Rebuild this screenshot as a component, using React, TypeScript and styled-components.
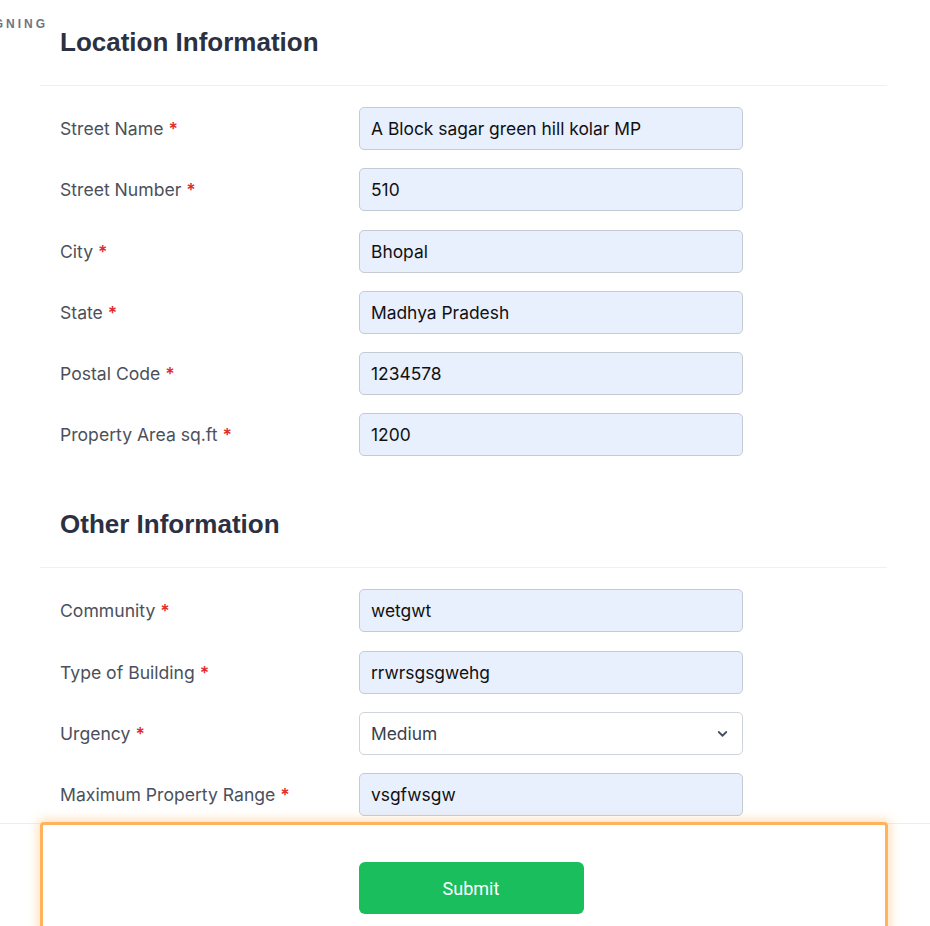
import React from "react";
import styled, { createGlobalStyle } from "styled-components";

const Global = createGlobalStyle`
  html, body { margin: 0; padding: 0; background: #fff; }
  body { font-family: Inter, "Noto Sans", sans-serif; }
  * { box-sizing: border-box; }
`;

const Page = styled.div`
  width: 930px;
  padding: 18px 0 140px 0;
`;

const Brand = styled.div`
  width: 48px;
  overflow: hidden;
  direction: rtl;
  white-space: nowrap;
  font-family: "Liberation Sans", Arial, sans-serif;
  font-size: 12px;
  font-weight: 700;
  letter-spacing: 3px;
  color: #707480;
  line-height: 12px;
  height: 12px;
`;

const Card = styled.div`
  margin: 0 43px 0 40px;
`;

const Section = styled.section`
  & + & { margin-top: 56px; }
`;

const SectionTitle = styled.h2`
  margin: -3px 0 0 0;
  padding: 0 20px 28px 20px;
  font-family: "Liberation Sans", Arial, sans-serif;
  font-size: 26px;
  line-height: 30px;
  font-weight: 700;
  color: #2b3142;
  border-bottom: 1px solid #eef0f2;
`;

const Fields = styled.div`
  display: flex;
  flex-direction: column;
  gap: 18.3px;
  padding: 21px 20px 0 20px;
`;

const Row = styled.div`
  display: grid;
  grid-template-columns: 299px 384px;
  align-items: center;
  height: 43px;
`;

const Label = styled.label`
  font-size: 17.6px;
  color: #4b505c;
  font-weight: 400;
`;

const Req = styled.span`
  color: #e02d2d;
  font-weight: 600;
  margin-left: 5px;
`;

const Input = styled.div<{ $plain?: boolean }>`
  height: 43px;
  border: 1px solid ${(p) => (p.$plain ? "#cfd3da" : "#c6cad3")};
  border-radius: 5px;
  background: ${(p) => (p.$plain ? "#ffffff" : "#e8f0fe")};
  display: flex;
  align-items: center;
  justify-content: space-between;
  padding: 0 12px 0 11px;
  font-size: 17.4px;
  color: ${(p) => (p.$plain ? "#3a3f4b" : "#111111")};
`;

const Footer = styled.div`
  position: fixed;
  left: 0;
  right: 0;
  bottom: 0;
  height: 103px;
  border-top: 1px solid #eceef4;
  background: #fff;
  display: flex;
  justify-content: flex-start;
`;

const FooterBox = styled.div`
  margin: -2px 0 0 40px;
  width: 848px;
  height: 130px;
  border: 3px solid #ffb35e;
  border-radius: 4px;
  box-shadow: 0 0 10px 3px rgba(255, 190, 110, 0.45);
  background: #fff;
  display: flex;
  justify-content: center;
  padding-top: 37px;
  padding-left: 14px;
`;

const SubmitButton = styled.button`
  width: 225px;
  height: 52px;
  border: none;
  border-radius: 6px;
  background: #1abe5d;
  color: #fff;
  font-family: Roboto, "Liberation Sans", sans-serif;
  font-size: 18px;
  cursor: pointer;
`;

const Chevron = () => (
  <svg width="15" height="15" viewBox="0 0 20 20" fill="none">
    <path d="M5 8l5 5 5-5" stroke="#4a5060" strokeWidth="2.4" strokeLinecap="round" strokeLinejoin="round" />
  </svg>
);

type Field = { label: string; value: string; select?: boolean };

const location: Field[] = [
  { label: "Street Name", value: "A Block sagar green hill kolar MP" },
  { label: "Street Number", value: "510" },
  { label: "City", value: "Bhopal" },
  { label: "State", value: "Madhya Pradesh" },
  { label: "Postal Code", value: "1234578" },
  { label: "Property Area sq.ft", value: "1200" },
];

const other: Field[] = [
  { label: "Community", value: "wetgwt" },
  { label: "Type of Building", value: "rrwrsgsgwehg" },
  { label: "Urgency", value: "Medium", select: true },
  { label: "Maximum Property Range", value: "vsgfwsgw" },
];

const FieldList = ({ items }: { items: Field[] }) => (
  <Fields>
    {items.map((f) => (
      <Row key={f.label}>
        <Label>
          {f.label}
          <Req>*</Req>
        </Label>
        <Input $plain={f.select}>
          <span>{f.value}</span>
          {f.select && <Chevron />}
        </Input>
      </Row>
    ))}
  </Fields>
);

export default function App() {
  return (
    <>
      <Global />
      <Page>
        <Brand>DESIGNING</Brand>
        <Card>
          <Section>
            <SectionTitle>Location Information</SectionTitle>
            <FieldList items={location} />
          </Section>
          <Section>
            <SectionTitle>Other Information</SectionTitle>
            <FieldList items={other} />
          </Section>
        </Card>
      </Page>
      <Footer>
        <FooterBox>
          <SubmitButton>Submit</SubmitButton>
        </FooterBox>
      </Footer>
    </>
  );
}
